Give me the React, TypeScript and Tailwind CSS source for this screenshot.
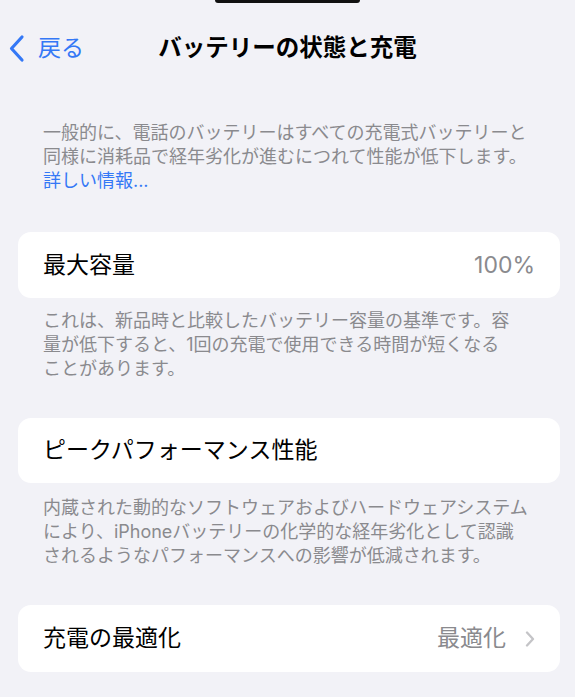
import { ReactNode } from "react";

const FONT = "font-['Inter','Noto_Sans_CJK_JP',sans-serif]";

function Footnote({ lines, children }: { lines: string[]; children?: ReactNode }) {
  return (
    <div className="px-[43px] text-[18px] leading-[24px] text-[#8a8a8e]">
      {lines.map((line) => (
        <div key={line} className="whitespace-nowrap">
          {line}
        </div>
      ))}
      {children}
    </div>
  );
}

function Row({ label, value, chevron, className }: { label: string; value?: string; chevron?: boolean; className?: string }) {
  return (
    <div className={`ml-[18px] mr-[15px] flex items-center justify-between rounded-[13px] bg-white px-[25px] ${className ?? ""}`}>
      <span className="text-[23px] text-black">{label}</span>
      {value && (
        <span className="flex items-center gap-[19px] text-[23px] text-[#8a8a8e]">
          {value}
          {chevron && (
            <svg width="10" height="16" viewBox="0 0 10 16" fill="none">
              <path d="M2 1.5L8 8L2 14.5" stroke="#c4c4c7" strokeWidth="2.3" strokeLinecap="round" strokeLinejoin="round" />
            </svg>
          )}
        </span>
      )}
    </div>
  );
}

export default function App() {
  return (
    <div className={`min-h-[697px] bg-[#f2f2f7] ${FONT}`}>
      {/* Dynamic island edge */}
      <div className="flex justify-center">
        <div className="h-[3px] w-[145px] rounded-b-full bg-[#111]" />
      </div>

      {/* Nav bar */}
      <header className="mt-[30px] grid h-[30px] grid-cols-[1fr_auto_1fr] items-center">
        <div className="flex items-center gap-[13px] pl-[8px] text-[#3478f6]">
          <svg width="17" height="29" viewBox="0 0 17 29" fill="none">
            <path d="M14 3L3.5 14.5L14 26" stroke="currentColor" strokeWidth="3.2" strokeLinecap="round" strokeLinejoin="round" />
          </svg>
          <span className="text-[23px] leading-none">戻る</span>
        </div>
        <h1 className="text-[23.5px] font-bold leading-none text-black">バッテリーの状態と充電</h1>
        <div />
      </header>

      <main>
        <div className="mt-[58px]">
          <Footnote
            lines={[
              "一般的に、電話のバッテリーはすべての充電式バッテリーと",
              "同様に消耗品で経年劣化が進むにつれて性能が低下します。",
            ]}
          >
            <div className="text-[#3478f6]">詳しい情報...</div>
          </Footnote>
        </div>

        <Row label="最大容量" value="100%" className="mt-[39px] h-[66px]" />
        <div className="mt-[11px]">
          <Footnote
            lines={[
              "これは、新品時と比較したバッテリー容量の基準です。容",
              "量が低下すると、1回の充電で使用できる時間が短くなる",
              "ことがあります。",
            ]}
          />
        </div>

        <Row label="ピークパフォーマンス性能" className="mt-[37px] h-[65px]" />
        <div className="mt-[13px]">
          <Footnote
            lines={[
              "内蔵された動的なソフトウェアおよびハードウェアシステム",
              "により、iPhoneバッテリーの化学的な経年劣化として認識",
              "されるようなパフォーマンスへの影響が低減されます。",
            ]}
          />
        </div>

        <Row label="充電の最適化" value="最適化" chevron className="mt-[37px] h-[67px]" />
      </main>
    </div>
  );
}
